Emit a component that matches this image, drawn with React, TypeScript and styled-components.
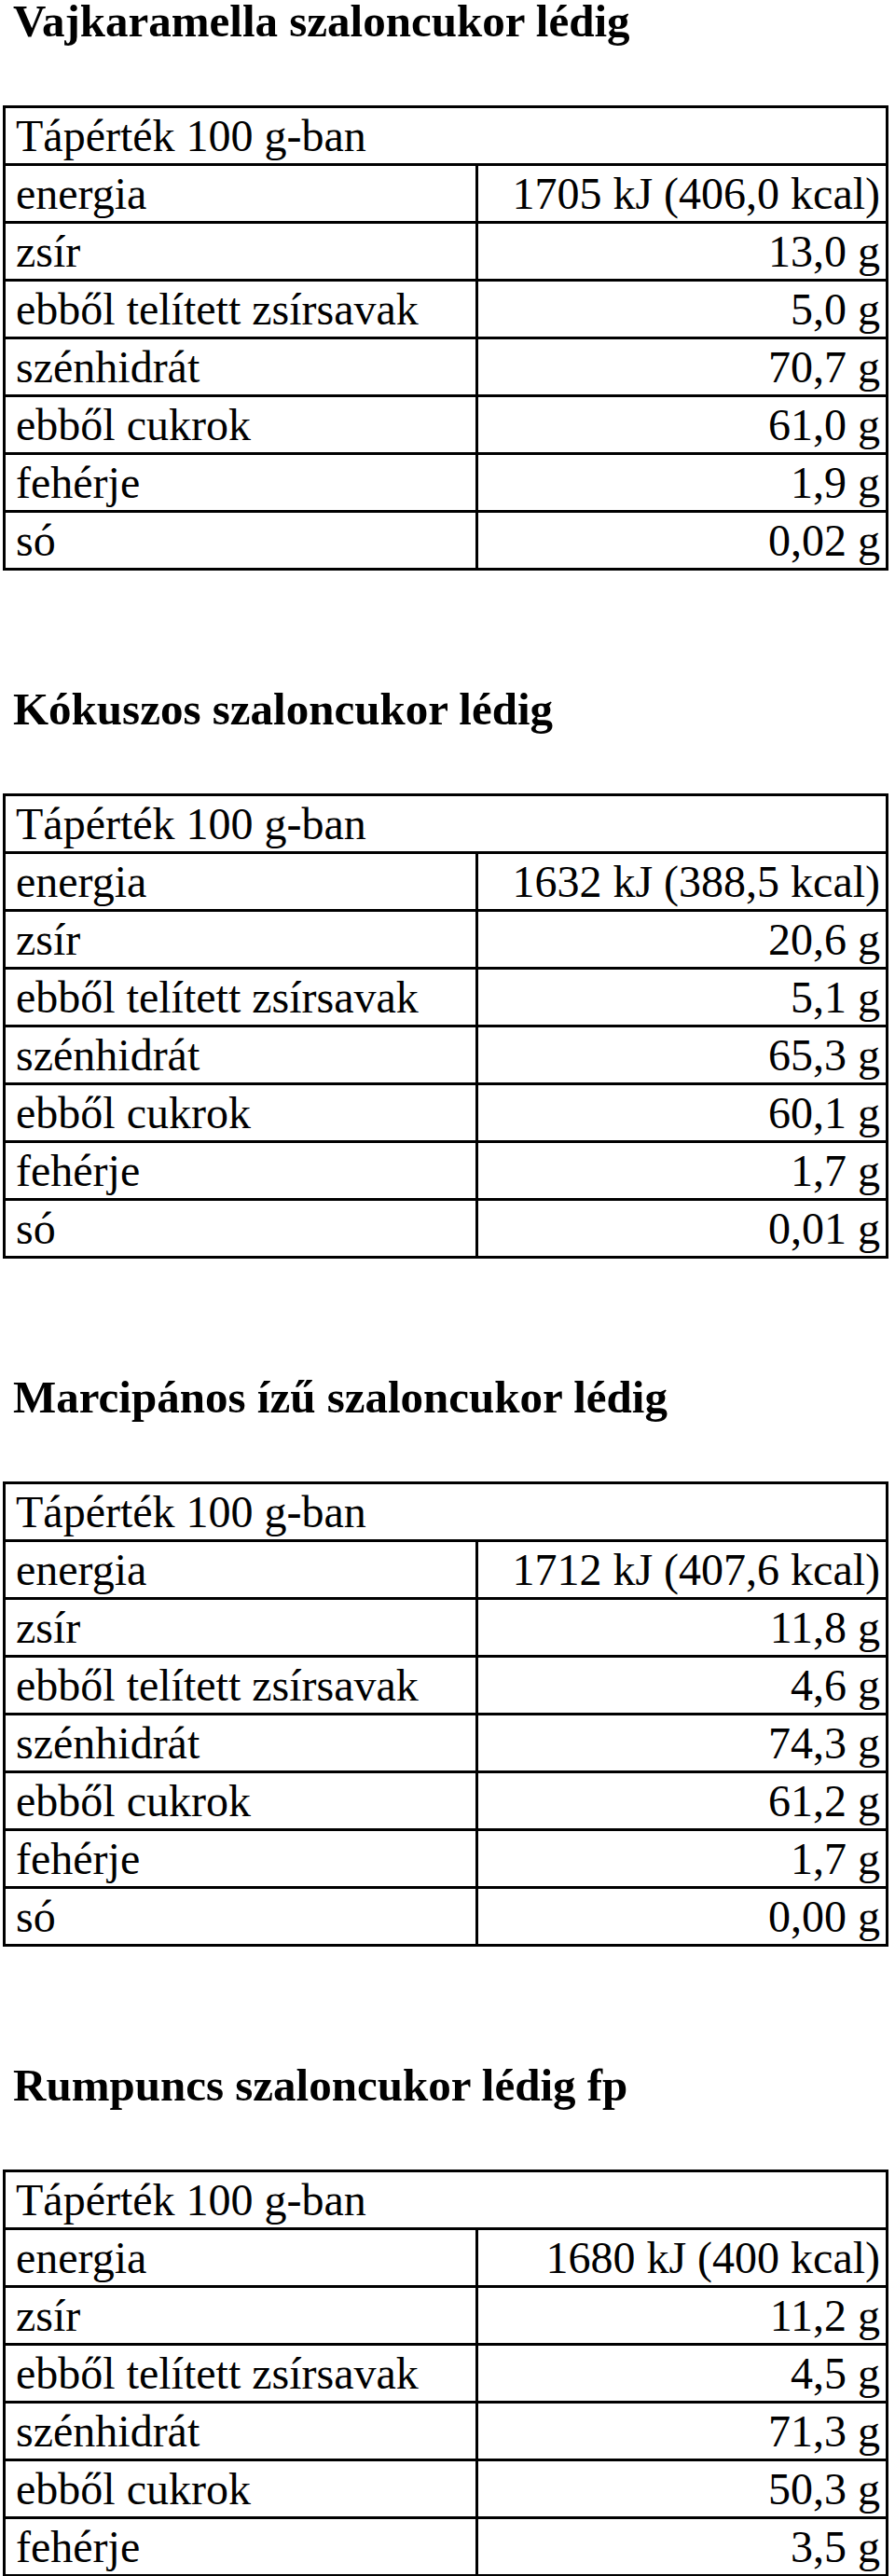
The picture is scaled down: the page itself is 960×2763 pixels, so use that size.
import styled, { createGlobalStyle } from "styled-components";

const GlobalStyle = createGlobalStyle`
  html, body {
    margin: 0;
    padding: 0;
    background: #fff;
  }
  body {
    font-family: "Liberation Serif", "Times New Roman", serif;
    color: #000;
  }
`;

const Page = styled.div`
  width: 960px;
`;

const Section = styled.section`
  padding-bottom: 126px;
`;

const Title = styled.h2`
  margin: 0 0 67px 14px;
  font-size: 49px;
  line-height: 46px;
  font-weight: bold;
`;

const Table = styled.table`
  margin-left: 3px;
  width: 950px;
  border-collapse: collapse;
  font-size: 48px;
  line-height: 59px;
`;

const Cell = styled.td<{ $right?: boolean }>`
  border: 3px solid #000;
  padding: 0 ${(p) => (p.$right ? "6px" : "0")} 0 ${(p) => (p.$right ? "0" : "11px")};
  text-align: ${(p) => (p.$right ? "right" : "left")};
  white-space: nowrap;
  width: ${(p) => (p.$right ? "auto" : "493px")};
`;

interface IProduct {
  name: string;
  values: string[];
}

const labels = [
  "energia",
  "zsír",
  "ebből telített zsírsavak",
  "szénhidrát",
  "ebből cukrok",
  "fehérje",
  "só",
];

const products: IProduct[] = [
  {
    name: "Vajkaramella szaloncukor lédig",
    values: ["1705 kJ (406,0 kcal)", "13,0 g", "5,0 g", "70,7 g", "61,0 g", "1,9 g", "0,02 g"],
  },
  {
    name: "Kókuszos szaloncukor lédig",
    values: ["1632 kJ (388,5 kcal)", "20,6 g", "5,1 g", "65,3 g", "60,1 g", "1,7 g", "0,01 g"],
  },
  {
    name: "Marcipános ízű szaloncukor lédig",
    values: ["1712 kJ (407,6 kcal)", "11,8 g", "4,6 g", "74,3 g", "61,2 g", "1,7 g", "0,00 g"],
  },
  {
    // a só sora már nem fér ki a képre
    name: "Rumpuncs szaloncukor lédig fp",
    values: ["1680 kJ (400 kcal)", "11,2 g", "4,5 g", "71,3 g", "50,3 g", "3,5 g"],
  },
];

function NutritionTable({ product }: { product: IProduct }) {
  return (
    <Section>
      <Title>{product.name}</Title>
      <Table>
        <tbody>
          <tr>
            <Cell colSpan={2}>Tápérték 100 g-ban</Cell>
          </tr>
          {product.values.map((value, i) => (
            <tr key={labels[i]}>
              <Cell>{labels[i]}</Cell>
              <Cell $right>{value}</Cell>
            </tr>
          ))}
        </tbody>
      </Table>
    </Section>
  );
}

export default function App() {
  return (
    <>
      <GlobalStyle />
      <Page>
        {products.map((p) => (
          <NutritionTable key={p.name} product={p} />
        ))}
      </Page>
    </>
  );
}
